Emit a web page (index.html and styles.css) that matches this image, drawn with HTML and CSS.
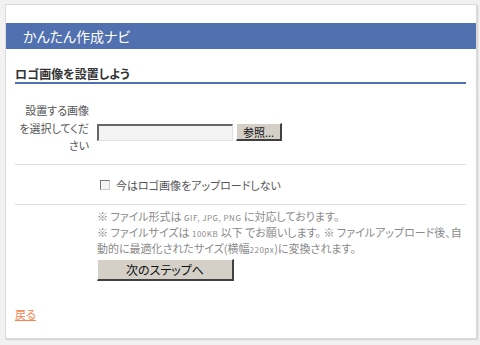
FILE: index.html
```html
<!DOCTYPE html>
<html lang="ja">
<head>
<meta charset="utf-8">
<link rel="stylesheet" href="styles.css">
</head>
<body>
<div class="panel">
  <div class="header">かんたん作成ナビ</div>
  <div class="section">
    <h2 class="title">ロゴ画像を設置しよう</h2>
    <div class="row form-row">
      <div class="label">設置する画像<br>を選択してくだ<br>さい</div>
      <div class="field">
        <span class="file-input"></span>
        <span class="btn browse">参照...</span>
      </div>
    </div>
    <div class="row check-row">
      <div class="label"></div>
      <div class="field">
        <span class="checkbox"></span>
        <span class="check-text">今はロゴ画像をアップロードしない</span>
      </div>
    </div>
    <div class="row notes-row">
      <div class="label"></div>
      <div class="notes">
        <p class="note">※ ファイル形式は <span class="sm">GIF, JPG, PNG</span> に対応しております。<br>※ ファイルサイズは <span class="sm">100KB</span> 以下 でお願いします。 ※ ファイルアップロード後、自<br>動的に最適化されたサイズ(横幅<span class="sm">220px</span>)に変換されます。</p>
        <span class="btn next">次のステップへ</span>
      </div>
    </div>
    <div class="back-row"><a class="back" href="#">戻る</a></div>
  </div>
</div>
</body>
</html>
```
FILE: styles.css
```css
html, body {
  margin: 0;
  padding: 0;
  background: #f1f1f1;
}
body {
  font-family: "Noto Sans CJK JP", "Noto Sans", sans-serif;
  font-feature-settings: "palt";
  color: #444;
  width: 480px;
  height: 345px;
  overflow: hidden;
}
.panel {
  margin: 4px 0 0 5px;
  width: 470px;
  height: 333px;
  background: #fff;
  border: 1px solid #dadada;
  box-shadow: 1px 1px 1px #d6d6d6;
}
.header {
  margin-top: 18px;
  height: 26px;
  line-height: 26px;
  background: #5170b0;
  color: #fff;
  font-size: 14px;
  padding-left: 17px;
}
.section {
  margin: 0 10px 0 9px;
}
.title {
  margin: 17px 0 0 0;
  font-size: 12px;
  line-height: 16px;
  font-weight: bold;
  color: #333;
  border-bottom: 2px solid #5170b0;
}
.row {
  display: flex;
  gap: 8px;
}
.label {
  width: 74px;
  flex: none;
  text-align: right;
  font-size: 11px;
  line-height: 17.5px;
  color: #555;
}
.form-row {
  padding: 18px 0 9px 0;
  border-bottom: 1px solid #ddd;
}
.form-row .field {
  display: flex;
  align-items: center;
  gap: 3px;
  margin-top: 21px;
  height: 18px;
}
.file-input {
  width: 133px;
  height: 14px;
  background: #f3f3f3;
  border-top: 2px solid #666;
  border-left: 2px solid #666;
  border-right: 1px solid #e0e0e0;
  border-bottom: 1px solid #e0e0e0;
  box-sizing: content-box;
  margin-top: 1px;
}
.btn {
  display: inline-flex;
  align-items: center;
  justify-content: center;
  background: #d4d0c8;
  color: #111;
  border-top: 1px solid #fff;
  border-left: 1px solid #fff;
  border-right: 2px solid #404040;
  border-bottom: 2px solid #404040;
  box-sizing: border-box;
}
.browse {
  width: 46px;
  height: 18px;
  font-size: 11px;
}
.check-row {
  padding: 11px 0 10px 0;
  border-bottom: 1px solid #ddd;
}
.check-row .field {
  display: flex;
  align-items: center;
  height: 18px;
}
.checkbox {
  width: 10px;
  height: 10px;
  box-sizing: border-box;
  margin-left: 3px;
  margin-right: 6px;
  background: #f4f4f4;
  border-top: 1px solid #777;
  border-left: 1px solid #777;
  border-right: 1px solid #ccc;
  border-bottom: 1px solid #ccc;
}
.check-text {
  font-size: 11px;
  color: #555;
}
.notes-row {
  padding-top: 3px;
}
.notes {
  width: 370px;
}
.note {
  margin: 0;
  font-size: 11px;
  line-height: 16px;
  color: #8a8a8a;
  white-space: nowrap;
}
.sm {
  font-size: 8px;
  line-height: 1;
  letter-spacing: 0.5px;
}
.next {
  margin-top: 2px;
  width: 137px;
  height: 22px;
  font-size: 12px;
}
.back-row {
  margin-top: 26px;
  font-size: 11px;
  line-height: 14px;
}
.back {
  color: #f5834f;
}
```
